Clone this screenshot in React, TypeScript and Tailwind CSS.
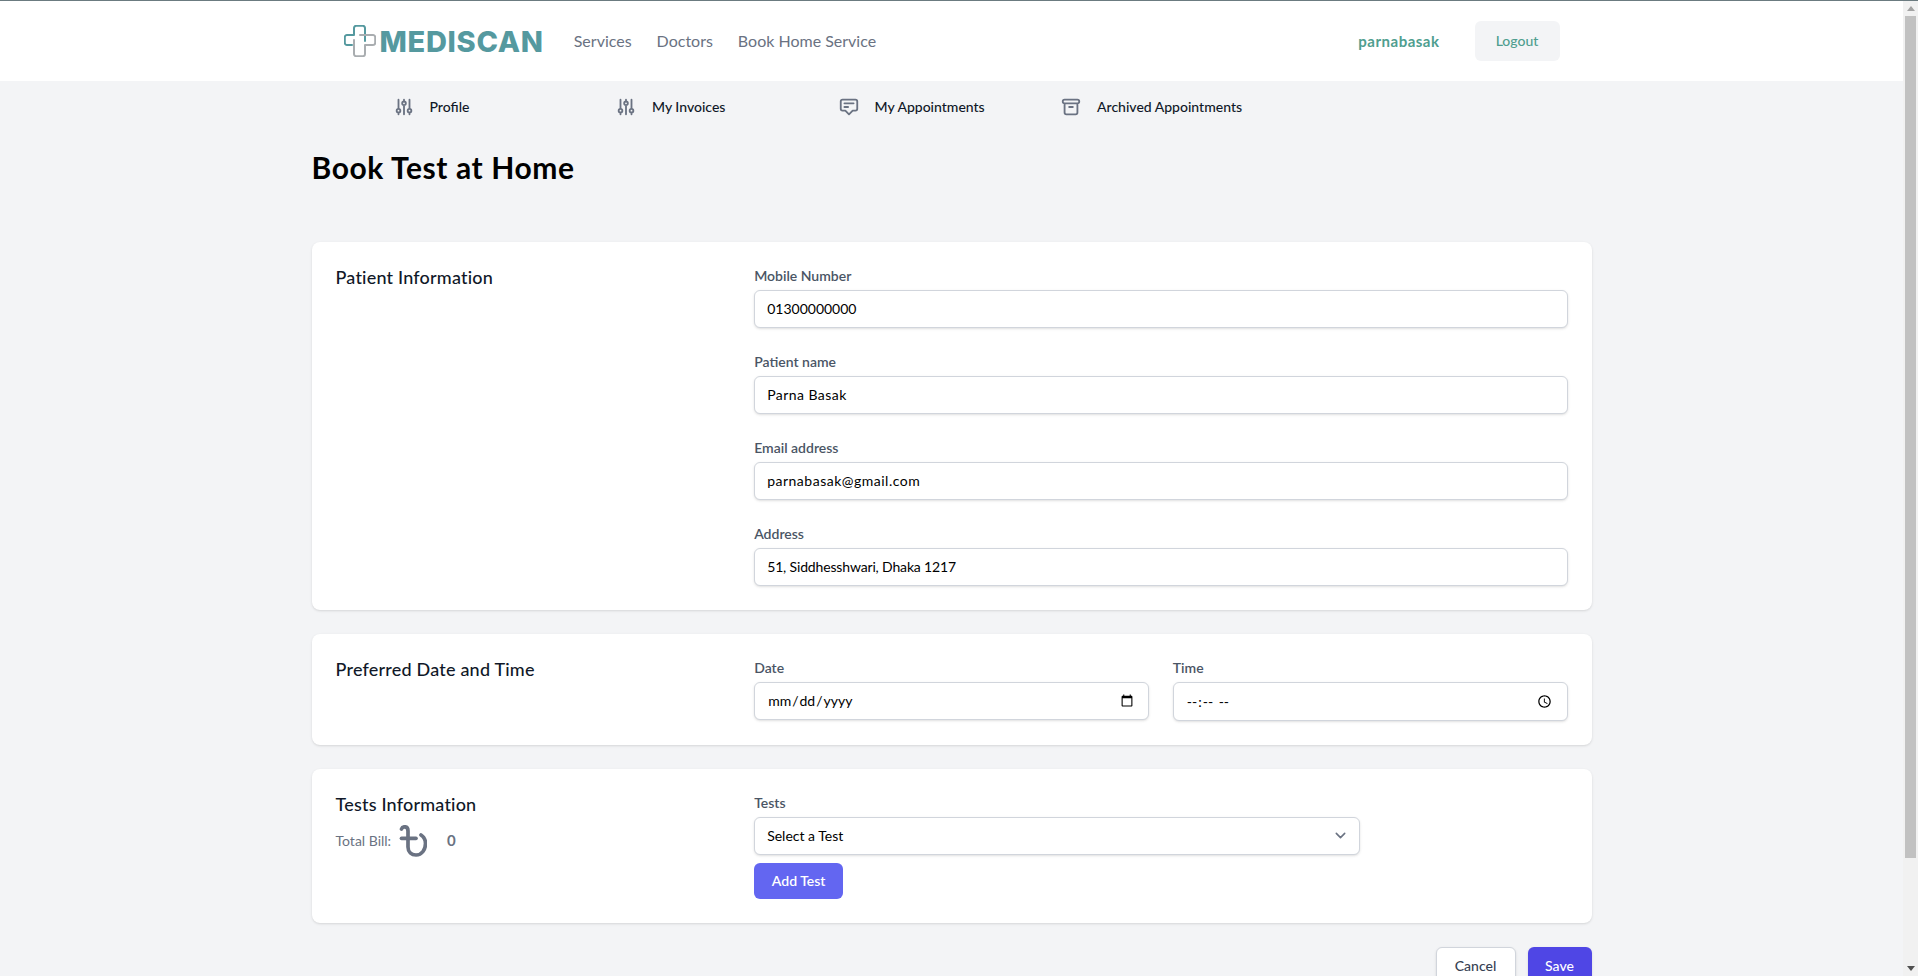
import { HiOutlineAdjustments, HiOutlineAnnotation, HiOutlineArchive } from 'react-icons/hi'

const inputClass =
  'block w-full h-[38px] rounded-md border border-gray-300 bg-white px-3 text-sm text-black shadow-sm outline-none'
const labelClass = 'mb-1 block text-sm font-semibold text-gray-600'

function Logo() {
  return (
    <div className="flex items-center gap-[4px]">
      <svg viewBox="0 0 32 32" className="h-8 w-8" fill="none" strokeWidth="2" strokeLinecap="round" strokeLinejoin="round">
        <path d="M8 20H3a2.2 2.2 0 0 1-2.2-2.2v-5.6A2.2 2.2 0 0 1 3 10h7V3a2.2 2.2 0 0 1 2.2-2.2h6.6A2.2 2.2 0 0 1 21 3v13" stroke="#55999f" />
        <path d="M16 10h13a2.2 2.2 0 0 1 2.2 2.2v5.6A2.2 2.2 0 0 1 29 20h-8v9a2.2 2.2 0 0 1-2.2 2.2h-6.6A2.2 2.2 0 0 1 10 29V15" stroke="#a9adb0" />
      </svg>
      <span className="font-['Inter',sans-serif] text-[29px] leading-none font-extrabold tracking-[0.7px] text-[#55999f]">MEDISCAN</span>
    </div>
  )
}

function TakaIcon() {
  return (
    <svg viewBox="0 0 28 32" className="h-8 w-7 text-gray-500" fill="none" stroke="currentColor" strokeWidth="3.7" strokeLinecap="round" strokeLinejoin="round">
      <path d="M2.500 4C3 2.500 4.500 1.800 5.700 1.800 7.800 1.800 9 3.500 9 6V22C9 27 12.500 30 17 30 23 30 26.500 24.500 26.500 18.500 26.500 15 25 12 22 10" />
      <path d="M2.500 13.300H17" />
    </svg>
  )
}

function Field({ label, value, tracking = '' }: { label: string; value: string; tracking?: string }) {
  return (
    <div>
      <label className={labelClass}>{label}</label>
      <input type="text" defaultValue={value} className={`${inputClass} pb-[2px] ${tracking}`} />
    </div>
  )
}

const tabs = [
  { name: 'Profile', icon: HiOutlineAdjustments },
  { name: 'My Invoices', icon: HiOutlineAdjustments },
  { name: 'My Appointments', icon: HiOutlineAnnotation },
  { name: 'Archived Appointments', icon: HiOutlineArchive },
]

// The screenshot has a classic browser scrollbar, headless hides the real one
function Scrollbar() {
  return (
    <aside className="flex w-[15px] shrink-0 flex-col bg-[#f1f1f1]">
      <div className="flex h-[15px] items-center justify-center text-[#a3a3a3]">
        <div className="h-0 w-0 border-x-[4px] border-b-[5px] border-x-transparent border-b-current" />
      </div>
      <div className="mx-[2px] h-[842px] bg-[#c1c1c1]" />
      <div className="mt-auto flex h-[15px] items-center justify-center text-[#505050]">
        <div className="h-0 w-0 border-x-[4px] border-t-[5px] border-x-transparent border-t-current" />
      </div>
    </aside>
  )
}

export default function App() {
  return (
    <div className="flex h-screen flex-col overflow-hidden border-t border-[#6b7b80] bg-gray-100 font-['Lato',sans-serif] text-gray-900">
      <div className="flex min-h-0 flex-1">
        <div className="min-w-0 flex-1 overflow-hidden">
          {/* Top nav */}
          <header className="h-[80px] bg-white">
            <div className="mx-auto flex h-full w-[1280px] items-center px-[32px]">
              <Logo />
              <nav className="ml-[30px] flex gap-[25px] text-base text-gray-500">
                <span>Services</span>
                <span>Doctors</span>
                <span>Book Home Service</span>
              </nav>
              <div className="ml-auto flex items-center gap-[35px]">
                <span className="text-[15px] font-bold tracking-[0.5px] text-[#4f9e8f]">parnabasak</span>
                <button className="h-10 w-[85px] rounded-md bg-gray-100 text-sm font-medium text-[#4f9e8f]">Logout</button>
              </div>
            </div>
          </header>

          <main className="mx-auto w-[1280px]">
            {/* Account tabs */}
            <div className="flex h-[52px] items-center pl-20">
              {tabs.map((tab) => (
                <div key={tab.name} className="flex w-[222.5px] shrink-0 items-center whitespace-nowrap">
                  <tab.icon className="ml-px mr-[15px] h-[22px] w-[22px] text-gray-500" />
                  <span className="text-sm font-medium text-gray-900">{tab.name}</span>
                </div>
              ))}
            </div>

            <h1 className="mt-4 text-3xl font-bold tracking-[0.6px] text-black">Book Test at Home</h1>

            <form className="mt-[57px] flex flex-col gap-6">
              <section className="rounded-lg bg-white p-6 shadow">
                <div className="grid grid-cols-3 gap-6">
                  <h3 className="text-lg leading-[22px] font-medium tracking-[0.2px]">Patient Information</h3>
                  <div className="col-span-2 flex flex-col gap-6">
                    <Field label="Mobile Number" value="01300000000" />
                    <Field label="Patient name" value="Parna Basak" tracking="tracking-[0.45px]" />
                    <Field label="Email address" value="parnabasak@gmail.com" tracking="tracking-[0.5px]" />
                    <Field label="Address" value="51, Siddhesshwari, Dhaka 1217" tracking="tracking-[-0.15px]" />
                  </div>
                </div>
              </section>

              <section className="rounded-lg bg-white p-6 shadow">
                <div className="grid grid-cols-3 gap-6">
                  <h3 className="text-lg leading-[22px] font-medium tracking-[0.2px]">Preferred Date and Time</h3>
                  <div className="col-span-2 grid grid-cols-2 gap-6">
                    <div>
                      <label className={labelClass}>Date</label>
                      <input type="date" className={inputClass} />
                    </div>
                    <div>
                      <label className={labelClass}>Time</label>
                      <input type="time" className={inputClass + ' h-[39px]'} />
                    </div>
                  </div>
                </div>
              </section>

              <section className="rounded-lg bg-white p-6 shadow">
                <div className="grid grid-cols-3 gap-6">
                  <div>
                    <h3 className="text-lg leading-[22px] font-medium tracking-[0.2px]">Tests Information</h3>
                    <div className="mt-[10px] flex items-center text-sm text-gray-500">
                      <span>Total Bill:</span>
                      <span className="ml-2"><TakaIcon /></span>
                      <span className="ml-5 text-[15px] font-bold">0</span>
                    </div>
                  </div>
                  <div className="col-span-2">
                    <label className={labelClass}>Tests</label>
                    <div className="relative w-[606px]">
                      <select className={inputClass + ' appearance-none'}>
                        <option>Select a Test</option>
                      </select>
                      <svg viewBox="0 0 20 20" fill="none" className="pointer-events-none absolute right-[9px] top-[8px] h-[21px] w-[21px] text-gray-500">
                        <path d="M6 8l4 4 4-4" stroke="currentColor" strokeWidth="1.500" strokeLinecap="round" strokeLinejoin="round" />
                      </svg>
                    </div>
                    <button type="button" className="mt-2 h-9 w-[89px] rounded-md bg-[#6366f1] text-sm font-semibold text-white">
                      Add Test
                    </button>
                  </div>
                </div>
              </section>

              <div className="flex justify-end gap-3">
                <button type="button" className="h-[38px] w-[80px] rounded-md border border-gray-300 bg-white text-sm font-medium text-gray-700 shadow-sm">
                  Cancel
                </button>
                <button type="button" className="h-[38px] w-[64px] rounded-md bg-[#4f46e5] text-sm font-medium text-white shadow-sm">
                  Save
                </button>
              </div>
            </form>
          </main>
        </div>
        <Scrollbar />
      </div>
    </div>
  )
}
